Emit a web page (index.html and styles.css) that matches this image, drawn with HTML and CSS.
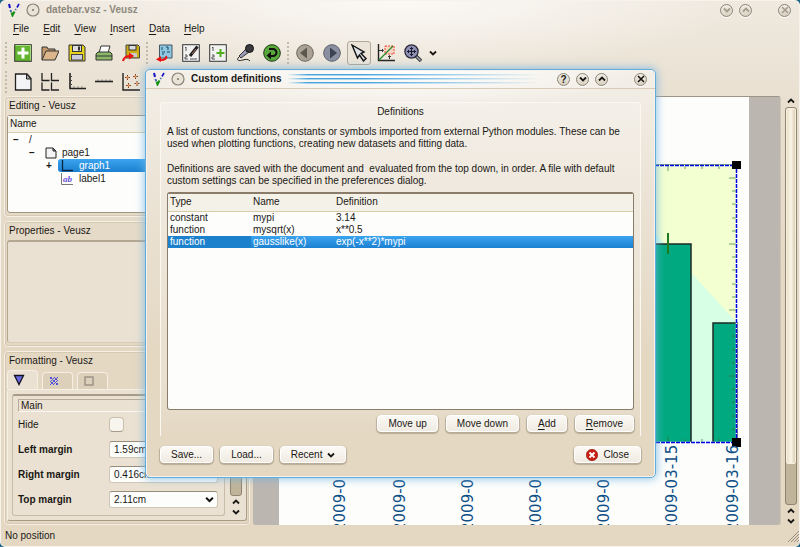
FILE: index.html
```html
<!DOCTYPE html>
<html lang="en">
<head>
  <meta charset="utf-8" />
  <title>datebar.vsz - Veusz</title>
  <link rel="stylesheet" href="styles.css">
</head>
<body>

<!-- shared symbols -->
<svg class="defs" aria-hidden="true">
  <symbol id="logo" viewBox="0 0 14 14">
    <path d="M2 1l1 4" stroke="#1414c8" stroke-width="2"/>
    <path d="M3.4 7l.8 2" stroke="#3f5fb0" stroke-width="2"/>
    <path d="M12 1l-2 3.5" stroke="#1414c8" stroke-width="1.6"/>
    <path d="M9 6l-.6 1" stroke="#3c60a0" stroke-width="1.6"/>
    <path d="M4.5 9.5l1 3 2-4" stroke="#169016" stroke-width="2" fill="none"/>
  </symbol>
  <symbol id="ring" viewBox="0 0 14 14">
    <circle cx="7" cy="7" r="6" fill="#e9e2d7" stroke="#8b8477" stroke-width="1.2"/>
    <circle cx="7" cy="7" r="1" fill="#7a7468"/>
  </symbol>
  <symbol id="down" viewBox="0 0 8 8"><path d="M1 2.5l3 3 3-3" fill="none" stroke="currentColor" stroke-width="1.8"/></symbol>
  <symbol id="up" viewBox="0 0 8 8"><path d="M1 5.5l3-3 3 3" fill="none" stroke="currentColor" stroke-width="1.8"/></symbol>
  <symbol id="cross" viewBox="0 0 8 8"><path d="M1 1l6 6M7 1l-6 6" stroke="currentColor" stroke-width="1.6"/></symbol>
</svg>

<div id="window">
  <header class="titlebar">
    <svg class="ic14"><use href="#logo"/></svg>
    <svg class="ic14"><use href="#ring"/></svg>
    <span class="caption">datebar.vsz - Veusz</span>
    <div class="winButtons inactive">
      <button aria-label="Minimize"><svg class="ic8"><use href="#down"/></svg></button>
      <button aria-label="Maximize"><svg class="ic8"><use href="#up"/></svg></button>
      <button class="close" aria-label="Close window"><svg class="ic8"><use href="#cross"/></svg></button>
    </div>
  </header>

  <nav class="menubar">
    <button><u>F</u>ile</button>
    <button><u>E</u>dit</button>
    <button><u>V</u>iew</button>
    <button><u>I</u>nsert</button>
    <button><u>D</u>ata</button>
    <button><u>H</u>elp</button>
  </nav>

  <!-- main toolbar -->
  <div class="toolbar">
    <span class="handle"></span>
    <button aria-label="New">
      <svg viewBox="0 0 18 18"><rect x=".7" y=".7" width="16.6" height="16.6" fill="#62b42e" stroke="#333"/><path d="M1.5 1.5h15v15" fill="none" stroke="#a6dc7e"/><path d="M9 3.5v11M3.5 9h11" stroke="#fff" stroke-width="3"/></svg>
    </button>
    <button aria-label="Open">
      <svg viewBox="0 0 18 18"><path d="M1 16V3h5l1 2h7v3" fill="#c49a6c" stroke="#333"/><path d="M1 16L5 7h13l-4 9z" fill="#dcb68a" stroke="#333"/></svg>
    </button>
    <button aria-label="Save">
      <svg viewBox="0 0 18 18"><path d="M1 1h14l2 2v14H1z" fill="#e4d21c" stroke="#333"/><rect x="4.5" y="1.5" width="9" height="6" fill="#ddd" stroke="#333"/><path d="M11 2.5v4" stroke="#333" stroke-width="2"/><rect x="3.5" y="10.5" width="11" height="5.5" fill="#ccd" stroke="#444"/></svg>
    </button>
    <button aria-label="Print">
      <svg viewBox="0 0 18 18"><path d="M4 9l2-7h9l-2 7z" fill="#fff" stroke="#333"/><path d="M1 10l2-2h12l2 2v6H1z" fill="#8bb868" stroke="#333"/><path d="M1 12h16" stroke="#333"/></svg>
    </button>
    <button aria-label="Export">
      <svg viewBox="0 0 18 18"><path d="M4 1h12l1.5 1.5V14H4z" fill="#cfae14" stroke="#444"/><rect x="7" y="1.5" width="7" height="4.5" fill="#ddd" stroke="#333"/><rect x="8" y="9" width="7" height="4" fill="#ccc"/><path d="M1 17c1-4 3-5 7-5" fill="none" stroke="#e11" stroke-width="2.2"/><path d="M7 8.5l5 3.5-5 3.5z" fill="#e11"/></svg>
    </button>

    <span class="handle"></span>
    <button aria-label="Reload data">
      <svg viewBox="0 0 18 18"><path d="M4.5 1H17v13H4.5z" fill="#8cc8e0" stroke="#456"/><path d="M7 3v3M11 3h2v3M7 8h3M12 8h3M7 10h2" stroke="#246" fill="none"/><path d="M11 12c1 2-1 4-5 4" fill="none" stroke="#e11" stroke-width="2.2"/><path d="M6 12v6l-5-2.5z" fill="#e11"/></svg>
    </button>
    <button aria-label="Edit data">
      <svg viewBox="0 0 18 18"><rect x=".7" y=".7" width="16.6" height="16.6" fill="#f2f2f0" stroke="#333"/><path d="M3 4l1-1v4M3 11h2v2H3v2h3M8 15h7" fill="none" stroke="#555"/><path d="M15.5 2.5L8 12" stroke="#222" stroke-width="3"/><path d="M14 5l-4 5" stroke="#a76"/></svg>
    </button>
    <button aria-label="Create data">
      <svg viewBox="0 0 18 18"><rect x=".7" y=".7" width="16.6" height="16.6" fill="#f2f2f0" stroke="#333"/><path d="M3 4l1-1v4M3 11h2v2H3v2h3" fill="none" stroke="#555"/><path d="M11.5 5v8M7.5 9h8" stroke="#4fae1c" stroke-width="2"/></svg>
    </button>
    <button aria-label="Capture data">
      <svg viewBox="0 0 18 18"><path d="M10 5l3 3-8 6-2-2z" fill="#9a9ab8" stroke="#333"/><circle cx="13.5" cy="4.5" r="4" fill="#3a3a40" stroke="#111"/><path d="M3 13c-4 4 1 4 4 3s5-1 7 1" fill="none" stroke="#222"/></svg>
    </button>
    <button aria-label="Refresh">
      <svg viewBox="0 0 18 18"><circle cx="9" cy="9" r="8.3" fill="#58a83a" stroke="#1c3a14"/><path d="M6 5h4a3 3 0 0 1 0 7H7" fill="none" stroke="#111" stroke-width="2"/><path d="M8 7.5v8L3.5 11.5z" fill="#111"/></svg>
    </button>

    <span class="handle"></span>
    <button aria-label="Previous page">
      <svg viewBox="0 0 18 18"><circle cx="9" cy="9" r="8.3" fill="#aaa294" stroke="#6c665c"/><path d="M11 3.5v11L4 9z" fill="#5c574e"/></svg>
    </button>
    <button aria-label="Next page">
      <svg viewBox="0 0 18 18"><circle cx="9" cy="9" r="8.3" fill="#8b90a0" stroke="#5a5e6c"/><path d="M7 3.5v11L14 9z" fill="#3c4250"/></svg>
    </button>
    <button class="checked" aria-label="Select">
      <svg viewBox="0 0 18 18"><path d="M2 1l12 7-3 1.5 5 5-2.5 2.5-4-6-2 3z" fill="#dfe3e6" stroke="#111" stroke-width="1.4"/></svg>
    </button>
    <button aria-label="Read data points">
      <svg viewBox="0 0 18 18"><path d="M1.5 0v16.5H18" fill="none" stroke="#222" stroke-width="1.4"/><rect x="8" y="2" width="9" height="8" fill="#f6d6c4" stroke="#e43" stroke-dasharray="2 1"/><path d="M2 16L16 2" stroke="#2a8a2a" stroke-width="1.3"/><path d="M2 6.5h4M5 5l1.5 1.5L5 8M12.5 15v-3M11 13l1.5-1.5L14 13" fill="none" stroke="#333"/></svg>
    </button>
    <button aria-label="Zoom">
      <svg viewBox="0 0 18 18"><path d="M11 11l6 6" stroke="#333" stroke-width="3.4"/><path d="M12 12l4.5 4.5" stroke="#aab" stroke-width="1.4"/><circle cx="7.5" cy="7.5" r="6.6" fill="#8f8fb4" stroke="#2a2a3a" stroke-width="1.3"/><path d="M7.5 3v9M3 7.5h9M6 4.5h3M6 10.5h3M4.5 6v3M10.5 6v3" stroke="#1c1c30" fill="none"/></svg>
    </button>
    <button class="drop" aria-label="Zoom options"><svg class="ic8"><use href="#down"/></svg></button>
  </div>

  <!-- widget toolbar -->
  <div class="toolbar">
    <span class="handle"></span>
    <button aria-label="Add page">
      <svg viewBox="0 0 18 18"><path d="M1.5 1h11.5l4 4.5V17H1.5z" fill="#f4f4f6" stroke="#222" stroke-width="1.3"/><path d="M12.5 1v5H17z" fill="#aaa" stroke="#222"/></svg>
    </button>
    <button aria-label="Add grid">
      <svg viewBox="0 0 18 18"><path d="M1 0v7.5h7.5M10.5 0v7.5H18M1 9.5V17h7.5M10.5 9.5V17H18" fill="none" stroke="#222" stroke-width="1.3"/></svg>
    </button>
    <button aria-label="Add graph">
      <svg viewBox="0 0 18 18"><path d="M2 0v15.5h16" fill="none" stroke="#222" stroke-width="1.6"/><path d="M3 3.5h1M3 7.5h1M3 11.5h1M6 14.5v-1M10 14.5v-1M14 14.5v-1" stroke="#444"/></svg>
    </button>
    <button aria-label="Add axis">
      <svg viewBox="0 0 18 18"><path d="M0 8.5h18" stroke="#222" stroke-width="1.6"/><path d="M3 8V6.5M7 8V6.5M11 8V6.5M15 8V6.5" stroke="#777"/></svg>
    </button>
    <button aria-label="Plot points">
      <svg viewBox="0 0 18 18"><path d="M1 0v17h17" fill="none" stroke="#222" stroke-width="1.4"/><path d="M5.5 2v5M3 4.5h5M13.5 1v5M11 3.5h5M6.5 10v5M4 12.5h5M15 8v5M12.5 10.5h5" stroke="#7a4028"/><path d="M5.5 3.5v2M13.5 2.5v2M6.5 11.5v2M15 9.5v2" stroke="#f0a060" stroke-width="2"/></svg>
    </button>
  </div>

  <main id="main">
    <!-- left docks -->
    <div id="docks">
      <section class="dock editing">
        <h2>Editing - Veusz</h2>
        <div class="tree">
          <div class="treeHead">Name</div>
          <ul>
            <li class="lvl0"><i>−</i><span>/</span></li>
            <li class="lvl1"><i>−</i><svg class="ic12" viewBox="0 0 12 12"><path d="M1 1h7l3 3v7H1z" fill="#f4f4f6" stroke="#222"/><path d="M8 1v3h3z" fill="#999" stroke="#222"/></svg><span>page1</span></li>
            <li class="lvl2 selected"><i>+</i><b><svg class="ic12" viewBox="0 0 12 12"><path d="M1.5 0v10.5H12" fill="none" stroke="#0c2440" stroke-width="1.3"/></svg><span>graph1</span></b></li>
            <li class="lvl2"><i></i><b><svg class="ic12" viewBox="0 0 12 12"><path d="M.5 0v11.5H12" fill="none" stroke="#777"/><text x="2" y="9" class="abIcon">ab</text></svg><span>label1</span></b></li>
          </ul>
        </div>
      </section>

      <section class="dock properties">
        <h2>Properties - Veusz</h2>
        <div class="emptyPane"></div>
      </section>

      <section class="dock formatting">
        <h2>Formatting - Veusz</h2>
        <div class="tabs">
          <button class="current" aria-label="Main"><svg viewBox="0 0 12 12"><path d="M1.5 1.5h9L6 10.5z" fill="#6a6ae0" stroke="#112" stroke-width="1.3"/></svg></button>
          <button aria-label="Background"><svg viewBox="0 0 12 12"><path d="M2 4l2-2M2 7l5-5M2 10l8-8M5 10l5-5M8 10l2-2M2 2l8 8M2 6l4 4M6 2l4 4" stroke="#5050dd"/></svg></button>
          <button aria-label="Border"><svg viewBox="0 0 12 12"><rect x="2" y="2" width="8" height="8" fill="none" stroke="#999084" stroke-width="1.4"/></svg></button>
        </div>
        <div class="tabPane">
          <form class="settings">
            <div class="sectionName">Main</div>
            <div class="row"><label class="plain" for="hide">Hide</label><input type="checkbox" id="hide"></div>
            <div class="row"><label for="left">Left margin</label><select id="left"><option>1.59cm</option></select></div>
            <div class="row"><label for="right">Right margin</label><select id="right"><option>0.416cm</option></select></div>
            <div class="row"><label for="top">Top margin</label><select id="top"><option>2.11cm</option></select></div>
            <div class="row"><label for="bottom"></label><select id="bottom" aria-label="Bottom margin"></select></div>
          </form>
          <div class="scrollbar small">
            <svg class="ic8"><use href="#up"/></svg>
            <div class="groove"><div class="thumb"></div></div>
            <svg class="ic8"><use href="#up"/></svg>
            <svg class="ic8"><use href="#down"/></svg>
          </div>
        </div>
      </section>
    </div>

    <!-- plot view -->
    <div id="plotView">
      <svg id="plot" viewBox="253 97 527 428" preserveAspectRatio="xMidYMin slice">
        <rect x="279" y="97" width="470" height="430" fill="#fdfdfc"/>
        <rect x="330" y="165" width="407" height="278" fill="#f3ffd0"/>
        <path d="M330 443V165H593L737 323V443z" fill="#d6ffe6"/>
        <path d="M645 443V244H691V443M713 443V323H737V443" fill="#00a97f" stroke="#1d2b26" stroke-width="1.5"/>
        <path d="M668 233v21" stroke="#1e7a1e" stroke-width="2"/>
        <path d="M729 178h7M729 244h7M729 310h7M729 376h7M732 191h4M732 204h4M732 218h4M732 231h4M732 257h4M732 270h4M732 284h4M732 297h4M732 323h4M732 336h4M732 350h4M732 363h4M732 389h4M732 402h4M732 416h4M732 429h4M668 166v5M685 166v3M702 166v3M719 166v3M668 442v-6M685 442v-3M702 442v-3M719 442v-3" stroke="#2d7a2d" stroke-opacity=".7"/>
        <path d="M330 165.5H736.5V442.5H330" fill="none" stroke="#fff" stroke-width="1.5"/>
        <path d="M330 164.5H736" stroke="#2d7a2d" stroke-opacity=".6"/>
        <path d="M330 165.5H736.5V442.5H330" fill="none" stroke="#0000e6" stroke-width="1.5" stroke-dasharray="4 1"/>
        <path d="M732 161h9v8h-9zM732 438h9v9h-9z"/>
        <g class="axisLabels">
          <text transform="translate(345 532) rotate(-90)">2009-03-10</text>
          <text transform="translate(405 532) rotate(-90)">2009-03-11</text>
          <text transform="translate(473 532) rotate(-90)">2009-03-12</text>
          <text transform="translate(541 532) rotate(-90)">2009-03-13</text>
          <text transform="translate(609 532) rotate(-90)">2009-03-14</text>
          <text transform="translate(677 532) rotate(-90)">2009-03-15</text>
          <text transform="translate(738 532) rotate(-90)">2009-03-16</text>
        </g>
      </svg>
    </div>
    <div class="scrollbar">
      <svg class="ic8"><use href="#up"/></svg>
      <div class="groove"><div class="thumb"></div></div>
      <svg class="ic8"><use href="#up"/></svg>
      <svg class="ic8"><use href="#down"/></svg>
    </div>
  </main>

  <footer class="statusbar">
    <span>No position</span>
    <svg class="grip" viewBox="0 0 12 12"><path d="M1 12L12 1M4 12l8-8M7 12l5-5M10 12l2-2" stroke="#9a907f"/></svg>
  </footer>
</div>

<!-- custom definitions dialog -->
<div id="dialog" role="dialog" aria-labelledby="dialogTitle">
  <header class="titlebar">
    <svg class="ic14"><use href="#logo"/></svg>
    <svg class="ic14"><use href="#ring"/></svg>
    <span class="caption" id="dialogTitle">Custom definitions</span>
    <span class="stripes"></span>
    <div class="winButtons">
      <button aria-label="Help">?</button>
      <button aria-label="Minimize"><svg class="ic8"><use href="#down"/></svg></button>
      <button aria-label="Maximize"><svg class="ic8"><use href="#up"/></svg></button>
      <button class="close" aria-label="Close dialog"><svg class="ic8"><use href="#cross"/></svg></button>
    </div>
  </header>

  <div class="dialogBody">
    <section class="group">
      <h3>Definitions</h3>
      <p>A list of custom functions, constants or symbols imported from external Python modules. These can be<br>used when plotting functions, creating new datasets and fitting data.</p>
      <p>Definitions are saved with the document and&nbsp; evaluated from the top down, in order. A file with default<br>custom settings can be specified in the preferences dialog.</p>
      <div class="tableFrame">
        <table>
          <thead>
            <tr><th>Type</th><th>Name</th><th>Definition</th></tr>
          </thead>
          <tbody>
            <tr><td>constant</td><td>mypi</td><td>3.14</td></tr>
            <tr><td>function</td><td>mysqrt(x)</td><td>x**0.5</td></tr>
            <tr class="selected"><td>function</td><td>gausslike(x)</td><td>exp(-x**2)*mypi</td></tr>
          </tbody>
        </table>
      </div>
      <div class="actions">
        <button class="btn">Move up</button>
        <button class="btn">Move down</button>
        <button class="btn"><u>A</u>dd</button>
        <button class="btn"><u>R</u>emove</button>
      </div>
    </section>
    <div class="dialogFoot">
      <button class="btn">Save...</button>
      <button class="btn">Load...</button>
      <button class="btn iconBtn">Recent <svg class="ic8"><use href="#down"/></svg></button>
      <button class="btn iconBtn closeBtn"><svg class="ic12" viewBox="0 0 12 12"><circle cx="6" cy="6" r="5.7" fill="#c81e14" stroke="#8a1008" stroke-width=".6"/><path d="M3.5 3.5l5 5M8.5 3.5l-5 5" stroke="#fff" stroke-width="1.8"/></svg> Close</button>
    </div>
  </div>
</div>

</body>
</html>
```

FILE: styles.css
```css
html, body {
  margin: 0;
  padding: 0;
  height: 100%;
  overflow: hidden;
  background: #22678a;
  box-sizing: border-box;
}
*, *::before, *::after {
  box-sizing: inherit;
}
body, button, input, select {
  font-family: "Liberation Sans", Arial, sans-serif;
  font-size: 10px;
  line-height: 12px;
  color: #1a1814;
}
button {
  margin: 0;
  padding: 0;
  border: 0;
  background: none;
}
svg {
  display: block;
}
u {
  text-underline-offset: 2px;
}
h2, h3 {
  margin: 0;
  font-size: inherit;
  font-weight: normal;
}
.defs {
  display: none;
}
.ic8 { width: 8px; height: 8px; flex: none; }
.ic12 { width: 12px; height: 12px; flex: none; }
.ic14 { width: 14px; height: 14px; flex: none; }

#window {
  display: flex;
  flex-direction: column;
  height: 100%;
  border: 1px solid #f7f3ec;
  border-radius: 5px;
  background:
    radial-gradient(ellipse 340px 70px at 50% 0, #fbf9f6, transparent),
    linear-gradient(#efe9df, #e8dece 120px, #e4d8c3 300px);
}

/* Title bars */
.titlebar {
  display: flex;
  align-items: center;
  gap: 5px;
  height: 18px;
  padding: 0 8px 0 6px;
}
.caption {
  margin-left: 1px;
  font-weight: bold;
  white-space: nowrap;
}
#window > .titlebar .caption {
  color: #8d877b;
}
.winButtons {
  display: flex;
  gap: 6px;
  margin-left: auto;
}
.winButtons button {
  display: flex;
  align-items: center;
  justify-content: center;
  width: 13px;
  height: 13px;
  border: 1px solid #8b8477;
  border-radius: 50%;
  background: linear-gradient(#f2eee7, #d9d0c0);
  box-shadow: 0 1px 0 #fff;
  font-weight: bold;
  line-height: 11px;
}
.winButtons .close {
  margin-left: 20px;
}
.winButtons.inactive button {
  color: #a39b8d;
}

/* Menus and toolbars */
.menubar {
  display: flex;
  gap: 14px;
  height: 19px;
  padding: 0 12px;
}
.toolbar {
  display: flex;
  align-items: center;
  gap: 3px;
  height: 29px;
  padding-left: 4px;
}
.toolbar button {
  display: flex;
  align-items: center;
  justify-content: center;
  width: 24px;
  height: 24px;
  border: 1px solid transparent;
  border-radius: 3px;
}
.toolbar button > svg:not(.ic8) {
  width: 18px;
  height: 18px;
  flex: none;
}
.toolbar .checked {
  border-color: #b0a898;
  background: #ece4d8;
}
.toolbar .drop {
  width: 10px;
}
.handle {
  width: 3px;
  height: 22px;
  background: radial-gradient(circle at 1px 1px, #c4baa8 1px, transparent 1px) 0 0 / 3px 4px;
}

/* Main area */
#main {
  display: flex;
  flex: 1 1 auto;
  min-height: 0;
  padding: 0 2px 0 3px;
}
#docks {
  display: flex;
  flex-direction: column;
  flex: 0 0 246px;
  gap: 4px;
}
.dock {
  display: flex;
  flex-direction: column;
  padding: 1px 2px 3px;
  border: 1px solid #f5efe4;
  border-radius: 4px;
  outline: 1px solid #d5c9b4;
  outline-offset: -2px;
}
.dock > h2 {
  padding: 2px 2px 3px;
}
.editing { flex: 0 0 121px; }
.properties { flex: 0 0 126px; }
.formatting { flex: 1 1 0; min-height: 0; }

.tree {
  flex: 1 1 auto;
  border: 1px solid #a2937e;
  border-radius: 3px;
  background: #fdfdfc;
}
.treeHead {
  padding: 2px;
  border-bottom: 1px solid #d8cca8;
  background: #f4f1e8;
}
.tree ul {
  margin: 0;
  padding: 0;
  list-style: none;
}
.tree li {
  display: flex;
  align-items: center;
  height: 13px;
}
.tree i {
  width: 16px;
  font-style: normal;
  font-weight: bold;
}
.tree b {
  display: flex;
  align-items: center;
  flex: 1;
  gap: 6px;
  height: 13px;
  padding-left: 3px;
  border-radius: 3px;
  font-weight: normal;
}
.lvl0 { padding-left: 5px; }
.lvl1 { padding-left: 21px; }
.lvl1 span { margin-left: 5px; }
.lvl2 { padding-left: 38px; }
.tree .lvl2 i { width: 12px; }
.tree .selected b {
  background: linear-gradient(#3ba4ef, #1b80d0);
  color: #fff;
}
.abIcon {
  font: italic bold 9px "Liberation Serif", serif;
  fill: #6a50d8;
}
.emptyPane {
  flex: 1 1 auto;
  border: 1px solid #d8ccb8;
  border-top: 2px solid #b3a792;
  border-left-color: #b3a792;
  border-radius: 3px;
  background: #eae1d2;
}

/* Formatting dock */
.tabs {
  display: flex;
  align-items: flex-end;
  gap: 4px;
}
.tabs button {
  width: 31px;
  height: 17px;
  padding-left: 5px;
  border: 1px solid #f5efe4;
  border-bottom: 0;
  border-radius: 4px 4px 0 0;
  background: #ddd0ba;
}
.tabs .current {
  height: 19px;
  background: #eae1d2;
}
.tabs svg {
  width: 12px;
  height: 12px;
}
.tabPane {
  display: flex;
  flex: 1 1 0;
  min-height: 0;
  gap: 5px;
  padding: 4px;
  border: 1px solid #f5efe4;
  border-right-color: #a89c88;
  border-bottom-color: #a89c88;
  border-radius: 3px;
  background: #eae1d2;
}
.settings {
  flex: 1 1 auto;
  min-width: 0;
  overflow: hidden;
  padding: 3px 6px 0 5px;
  border: 1px solid #c8bca8;
  border-top: 2px solid #a89c88;
  border-radius: 3px;
}
.sectionName {
  height: 13px;
  padding-left: 2px;
  border: 1px solid #fbf7f0;
  border-top-color: #b8ac98;
  border-left-color: #b8ac98;
}
.row {
  display: flex;
  align-items: center;
  height: 25px;
}
.row label {
  flex: 0 0 91px;
  font-weight: bold;
}
.row .plain {
  font-weight: normal;
}
.row input {
  width: 15px;
  height: 15px;
  margin: 0;
  appearance: none;
  border: 1px solid #c8bfae;
  border-bottom-color: #a89c88;
  border-radius: 4px;
  background: #f8f5ef;
}
.row select {
  flex: 1;
  height: 17px;
  padding: 0 4px;
  appearance: none;
  border: 1px solid #cfc6b6;
  border-top-color: #978c7a;
  border-radius: 3px;
  background: #fdfdfc url("data:image/svg+xml,%3Csvg xmlns='http://www.w3.org/2000/svg' viewBox='0 0 8 8'%3E%3Cpath d='M1 2.5l3 3 3-3' fill='none' stroke='%23111' stroke-width='1.8'/%3E%3C/svg%3E") no-repeat right 3px center / 9px 9px;
}

/* Scroll bars */
.scrollbar {
  display: flex;
  flex-direction: column;
  align-items: center;
  flex: 0 0 12px;
  gap: 2px;
  padding: 1px 0 0;
}
.scrollbar .groove {
  flex: 1;
  width: 12px;
  border: 1px solid #8f8470;
  border-radius: 3px;
  background: #c0b49a;
}
.scrollbar .thumb {
  height: 90%;
  border: 1px solid #f6f0e2;
  border-radius: 2px;
  background: linear-gradient(90deg, #ece0c6, #faf5ea 50%, #ddcfb2);
}
.small .thumb {
  height: 74%;
}

/* Plot */
#plotView {
  flex: 1 1 0;
  min-width: 0;
  margin: 0 4px 0 3px;
  overflow: hidden;
  border-top: 1px solid #9c9488;
  border-right: 1px solid #cfc6b6;
  border-radius: 3px;
  background: #bcb6b0;
}
#plot {
  width: 100%;
  height: 100%;
}
.axisLabels text {
  font: 15px "DejaVu Sans", sans-serif;
  fill: #0d4f86;
}

.statusbar {
  display: flex;
  align-items: center;
  justify-content: space-between;
  height: 21px;
  padding: 0 0 0 4px;
}
.grip {
  width: 12px;
  height: 12px;
}

/* Dialog */
#dialog {
  position: absolute;
  top: 69px;
  left: calc(50% - 255px);
  width: 511px;
  border: 1px solid #62acdc;
  border-radius: 5px;
  background:
    radial-gradient(ellipse 240px 40px at 50% 0, #fff, transparent),
    linear-gradient(#f3efe8, #ece4d7 110px, #e4d8c3 280px);
  box-shadow: inset 0 0 0 1px #f7f3ec, 0 0 8px 1px rgba(110, 180, 225, 0.75);
}
#dialog > .titlebar {
  height: 19px;
  border-bottom: 1px solid #d9cbb6;
}
.stripes {
  flex: 1;
  height: 10px;
  margin-right: 10px;
  background: repeating-linear-gradient(#4aa4dc 0 1px, #a8d4f0 1px 2px, transparent 2px 4px);
  mask-image: linear-gradient(90deg, transparent, #000 8%, #000 30%, transparent);
}
.dialogBody {
  padding: 13px 14px 14px;
}
.group {
  padding: 3px 6px 4px;
  border: 1px solid #fbf8f2;
  border-bottom: 0;
  border-radius: 4px 4px 0 0;
  background: linear-gradient(rgba(255, 255, 255, 0.2), rgba(255, 255, 255, 0.2) 85%, transparent);
}
.group h3 {
  margin-bottom: 8px;
  text-align: center;
}
.group p {
  margin: 0 0 13px;
  padding: 0;
  line-height: 12px;
  white-space: nowrap;
}
.tableFrame {
  height: 218px;
  margin-top: -8px;
  border: 1px solid #8a7c68;
  border-top-width: 2px;
  border-radius: 3px;
  background: #fdfdfc;
}
table {
  width: 100%;
  border-collapse: collapse;
  table-layout: fixed;
}
th, td {
  padding: 0 2px;
  text-align: left;
  font-weight: normal;
}
th {
  height: 17px;
  border-bottom: 1px solid #d8cca8;
  background: #f4f1e8;
}
th:nth-child(-n+2) {
  width: 83px;
}
td {
  height: 12px;
}
.selected td {
  background: linear-gradient(#3ba4ef, #1b80d0);
  color: #fff;
}
.selected td:first-child {
  background: #1c81cc;
}
.btn {
  height: 17px;
  padding: 0 10px;
  border: 1px solid #fff;
  border-radius: 4px;
  background: linear-gradient(#fbf9f5, #f0ebe2);
  box-shadow: 0 1px 1px 1px #b8ac98;
}
.iconBtn {
  display: flex;
  align-items: center;
  gap: 5px;
}
.actions {
  display: flex;
  justify-content: flex-end;
  gap: 8px;
  margin-top: 5px;
}
.dialogFoot {
  display: flex;
  gap: 7px;
  margin-top: 10px;
}
.closeBtn {
  margin-left: auto;
  padding: 0 11px;
}
```
